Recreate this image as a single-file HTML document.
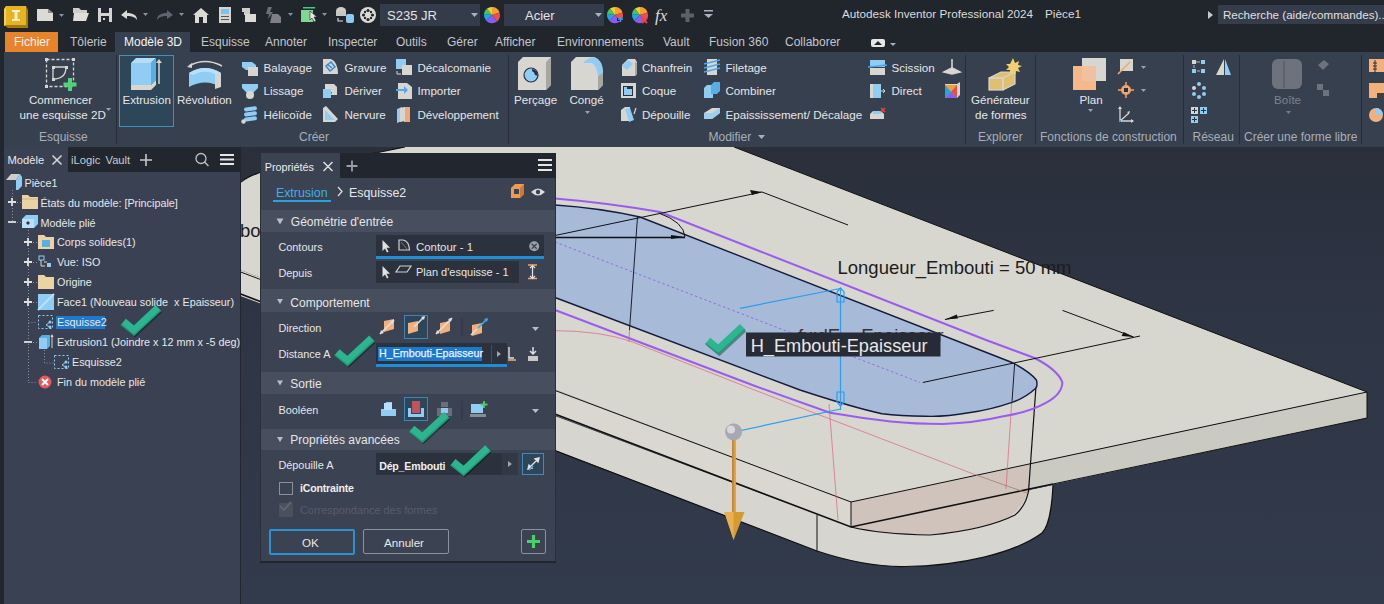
<!DOCTYPE html>
<html><head><meta charset="utf-8">
<style>
*{margin:0;padding:0;box-sizing:border-box}
html,body{width:1384px;height:604px;overflow:hidden;background:#22262e;font-family:"Liberation Sans",sans-serif;font-size:12px;color:#e8e8e8}
.a{position:absolute;white-space:nowrap}
#title{position:absolute;left:0;top:0;width:1384px;height:31px;background:#21252c}
#tabs{position:absolute;left:0;top:31px;width:1384px;height:21px;background:#21252c}
#ribbon{position:absolute;left:4px;top:52px;width:1380px;height:95px;background:#37404f}
#browser{position:absolute;left:4px;top:147px;width:236px;height:457px;background:#394153}
#vp{position:absolute;left:241px;top:147px;width:1143px;height:457px;background:linear-gradient(#2a2f3b,#2e3545 40%,#323b4c);overflow:hidden}
#panel{position:absolute;left:260px;top:153px;width:296px;height:410px;background:#3b4252;border:1px solid #20242c}
.tab{position:absolute;top:34px;color:#c9ccd2;font-size:12px}
.lbl{position:absolute;color:#aab0ba;font-size:12px}
.sep{position:absolute;top:56px;width:1px;height:88px;background:#262b35}
</style></head><body>
<div id="title">
<svg class="a" style="left:0;top:0" width="720" height="31" viewBox="0 0 720 31">
 <!-- Inventor logo -->
 <path d="M6 8 L26 6 L28 10 L28 28 L8 28 L4 25 L4 10 Z" fill="#a37a10"/>
 <rect x="6" y="6" width="20" height="19" fill="#e7b320"/>
 <path d="M4 9 L6 6 L6 25 L4 26 Z" fill="#f3d25a"/>
 <path d="M12 10 h8 v2 h-2.5 v7 h2.5 v2 h-8 v-2 h2.5 v-7 h-2.5 z" fill="#f6ecd0"/>
 <!-- new doc -->
 <path d="M37 9 h11 l5 4 v8 h-16 z" fill="#dcdad4"/>
 <path d="M48 9 v4 h5" fill="#8e8c88"/>
 <path d="M59 14 h5 l-2.5 3 z" fill="#8a93a6"/>
 <!-- open folder -->
 <path d="M73 8 h6 l2 2 h6 v3 h-14 z" fill="#cfcdc7"/>
 <path d="M74 13 h15 l-3 8 h-13 z" fill="#e0ded8"/>
 <!-- save -->
 <rect x="98" y="8" width="14" height="14" fill="#d6d4ce"/>
 <rect x="101" y="8" width="8" height="5" fill="#22262e"/>
 <rect x="101" y="16" width="8" height="6" fill="#22262e"/>
 <rect x="103" y="18" width="2" height="2" fill="#d6d4ce"/>
 <!-- undo -->
 <path d="M121 15 l6 -5 v3 c6 0 10 2 10 7 c-2 -3 -5 -4 -10 -4 v3 z" fill="#dcdad4"/>
 <path d="M143 13 h5 l-2.5 3 z" fill="#8a93a6"/>
 <!-- redo grey -->
 <path d="M173 15 l-6 -5 v3 c-6 0 -10 2 -10 7 c2 -3 5 -4 10 -4 v3 z" fill="#5c6472"/>
 <path d="M179 13 h5 l-2.5 3 z" fill="#8a93a6"/>
 <!-- home -->
 <path d="M193 15 l8 -7 l8 7 h-2 v8 h-12 v-8 z" fill="#dcdad4"/>
 <rect x="199" y="17" width="4" height="6" fill="#22262e"/>
 <!-- panel -->
 <rect x="219" y="7" width="12" height="16" fill="#d6d4ce"/>
 <rect x="221" y="9" width="8" height="5" fill="#7cc4f0"/>
 <rect x="221" y="16" width="8" height="1" fill="#555"/><rect x="221" y="19" width="8" height="1" fill="#555"/>
 <!-- folders -->
 <rect x="242" y="8" width="8" height="4" fill="#cfcdc7"/>
 <rect x="244" y="12" width="6" height="3" fill="#cfcdc7"/>
 <rect x="245" y="14" width="11" height="8" fill="#dcdad4"/>
 <!-- lightning grey -->
 <path d="M268 7 l4 0 l-2 5 l3 0 l-5 7 l1 -5 l-3 0 z" fill="#6d6f78"/>
 <path d="M272 14 h6 l3 3 v6 h-11 z" fill="#7f7f84"/>
 <path d="M288 13 h5 l-2.5 3 z" fill="#8a93a6"/>
 <!-- green select -->
 <rect x="303" y="7" width="12" height="1.5" fill="#3bd07a"/>
 <rect x="301" y="10" width="12" height="12" fill="#7fd890"/>
 <path d="M310 11 l7 6 l-3 0 l2 4 l-2 1 l-2 -4 l-2 2 z" fill="#e8e8e8" stroke="#22262e" stroke-width=".6"/>
 <path d="M322 13 h5 l-2.5 3 z" fill="#8a93a6"/>
 <!-- db -->
 <ellipse cx="341" cy="11" rx="5" ry="4" fill="#d0cec8"/>
 <rect x="336" y="11" width="10" height="5" fill="#c8c6c0"/>
 <rect x="346" y="14" width="8" height="9" rx="2" fill="#8ccaf5"/>
 <path d="M338 18 v3 h5" stroke="#ddd" stroke-width="1.2" fill="none"/>
 <!-- reel -->
 <circle cx="368" cy="15" r="8" fill="#dcdad4"/>
 <circle cx="368" cy="15" r="6.5" fill="none" stroke="#22262e" stroke-width="0"/>
 <circle cx="368" cy="10.5" r="1.6" fill="#22262e"/><circle cx="368" cy="19.5" r="1.6" fill="#22262e"/>
 <circle cx="363.5" cy="15" r="1.6" fill="#22262e"/><circle cx="372.5" cy="15" r="1.6" fill="#22262e"/>
 <circle cx="365" cy="12" r="1.2" fill="#22262e"/><circle cx="371" cy="12" r="1.2" fill="#22262e"/>
 <circle cx="365" cy="18" r="1.2" fill="#22262e"/><circle cx="371" cy="18" r="1.2" fill="#22262e"/>
 <!-- combos -->
 <rect x="380" y="4" width="100" height="22" fill="#343b4b"/>
 <path d="M471 13 h7 l-3.5 4 z" fill="#aab2c2"/>
 <rect x="504" y="4" width="100" height="22" fill="#343b4b"/>
 <path d="M595 13 h7 l-3.5 4 z" fill="#aab2c2"/>
 <!-- wheels -->
 <g id="wheel">
 <path d="M492 15 L492 7 A8 8 0 0 1 499.5 12.5 Z" fill="#f7a032"/>
 <path d="M492 15 L499.5 12.5 A8 8 0 0 1 497 21.5 Z" fill="#ef4d4d"/>
 <path d="M492 15 L497 21.5 A8 8 0 0 1 486 20.5 Z" fill="#8b5cf0"/>
 <path d="M492 15 L486 20.5 A8 8 0 0 1 484 14 Z" fill="#1fa6e8"/>
 <path d="M492 15 L484 14 A8 8 0 0 1 487 8.5 Z" fill="#3cc76a"/>
 <path d="M492 15 L487 8.5 A8 8 0 0 1 492 7 Z" fill="#f0d030"/>
 </g>
 <use href="#wheel" x="123" y="0"/>
 <rect x="617" y="18" width="7" height="3" fill="#22262e"/>
 <path d="M618 19 h5 M620.5 17 v5" stroke="#3aa0e8" stroke-width="1.5"/>
 <use href="#wheel" x="148" y="0"/>
 <path d="M642 18 l5 5 M647 18 l-5 5" stroke="#ef4040" stroke-width="2"/>
 <text x="655" y="21" font-family="Liberation Serif" font-style="italic" font-size="17" fill="#dcdad4">fx</text>
 <path d="M687.5 9 v13 M681 15.5 h13" stroke="#5a606c" stroke-width="4"/>
 <rect x="704" y="10" width="9" height="1.5" fill="#aab2c2"/>
 <path d="M704 14 h9 l-4.5 4 z" fill="#aab2c2"/>
</svg>
<div class="a" style="left:387px;top:8px;font-size:13px;color:#e4e4e4">S235 JR</div>
<div class="a" style="left:525px;top:8px;font-size:13px;color:#e4e4e4">Acier</div>
<div class="a" style="left:842px;top:7px;font-size:11.7px;color:#dcdcdc">Autodesk Inventor Professional 2024</div>
<div class="a" style="left:1045px;top:7px;font-size:11.8px;color:#dcdcdc">Pièce1</div>
<svg class="a" style="left:1207px;top:10px" width="8" height="10"><path d="M1 1 l5 4 l-5 4 z" fill="#c8c8c8"/></svg>
<div class="a" style="left:1217.5px;top:5px;width:167px;height:19px;background:#353c4b"></div>
<div class="a" style="left:1223px;top:7.5px;font-size:11.6px;color:#e0e0e0">Recherche (aide/commandes)...</div>
</div>
<div id="tabs">
<div class="a" style="left:5px;top:1px;width:53px;height:20px;background:#e8832a"></div>
<div class="a" style="left:115px;top:1px;width:75px;height:21px;background:#37404f"></div>
<div class="a" style="left:14px;top:4px;font-size:12px;color:#f4f4f4">Fichier</div>
<div class="a" style="left:70px;top:4px;font-size:12px;color:#c3c7ce">Tôlerie</div>
<div class="a" style="left:124px;top:4px;font-size:12px;color:#f4f4f4">Modèle 3D</div>
<div class="a" style="left:201px;top:4px;font-size:12px;color:#c3c7ce">Esquisse</div>
<div class="a" style="left:265px;top:4px;font-size:12px;color:#c3c7ce">Annoter</div>
<div class="a" style="left:328px;top:4px;font-size:12px;color:#c3c7ce">Inspecter</div>
<div class="a" style="left:396px;top:4px;font-size:12px;color:#c3c7ce">Outils</div>
<div class="a" style="left:447px;top:4px;font-size:12px;color:#c3c7ce">Gérer</div>
<div class="a" style="left:495px;top:4px;font-size:12px;color:#c3c7ce">Afficher</div>
<div class="a" style="left:557px;top:4px;font-size:12px;color:#c3c7ce">Environnements</div>
<div class="a" style="left:663px;top:4px;font-size:12px;color:#c3c7ce">Vault</div>
<div class="a" style="left:709px;top:4px;font-size:12px;color:#c3c7ce">Fusion 360</div>
<div class="a" style="left:785px;top:4px;font-size:12px;color:#c3c7ce">Collaborer</div>
<svg class="a" style="left:870px;top:6px" width="30" height="12"><rect x="1" y="2" width="14" height="8" rx="2" fill="#e6e6e6"/><path d="M4 8 l4 -4 l4 4z" fill="#21252c"/><path d="M20 6 h6 l-3 3z" fill="#aab2c2"/></svg>
</div>
<div id="ribbon"></div>
<svg class="a" style="left:0;top:52px" width="1384" height="95" viewBox="0 52 1384 95">
<!-- separators -->
<g fill="#272c36">
<rect x="116" y="55" width="1" height="89"/><rect x="508" y="55" width="1" height="89"/>
<rect x="965" y="55" width="1" height="89"/><rect x="1035" y="55" width="1" height="89"/>
<rect x="1183" y="55" width="1" height="89"/><rect x="1239" y="55" width="1" height="89"/>
<rect x="1361" y="55" width="1" height="89"/>
</g>
<!-- Commencer esquisse icon -->
<g stroke="#d8d6d0" stroke-width="1.3" fill="none">
<rect x="46.5" y="59.5" width="27" height="27" stroke-dasharray="3 2"/>
<path d="M53 67 v12 M53 67 h13 M66 67 c0 8 -4 12 -13 12"/>
</g>
<g fill="#d8d6d0"><rect x="45" y="58" width="3" height="3"/><rect x="72" y="58" width="3" height="3"/><rect x="45" y="85" width="3" height="3"/>
<rect x="52" y="66" width="3" height="3"/><rect x="65" y="66" width="3" height="3"/><rect x="52" y="78" width="3" height="3"/></g>
<path d="M70 78 v13 M63.5 84.5 h13" stroke="#4fd27a" stroke-width="4"/>
<path d="M106 108 h5 l-2.5 3z" fill="#9aa2b0"/>
<!-- Extrusion highlight -->
<rect x="119.5" y="55.5" width="54" height="71" fill="#2d4659" stroke="#3f8fbf" stroke-width="1"/>
<path d="M131 63 l5 -5 h20 l-5 5z" fill="#b5ddf8"/>
<rect x="131" y="63" width="20" height="22" fill="#8fcdf5"/>
<path d="M151 63 l5 -5 v22 l-5 5z" fill="#5aaee6"/>
<path d="M131 85 h20 l5 -5 v5 l-5 5 h-20z" fill="#d8d6d0"/>
<path d="M159 84 v-23" stroke="#d8d6d0" stroke-width="1.5"/><path d="M156 63 l3 -4 l3 4z" fill="#d8d6d0"/>
<!-- Revolution -->
<path d="M189 66 q16 -9 33 0" stroke="#d8d6d0" stroke-width="1.5" fill="none"/><path d="M187 67 l5 -4 l0 5z" fill="#d8d6d0"/>
<path d="M189 73 q16 -10 32 0 l0 14 q-16 -9 -32 0z" fill="#8fcdf5"/>
<path d="M189 73 q16 -10 32 0 l-4 2 q-12 -7 -24 0z" fill="#b8e0fa"/>
<path d="M215 74 l6 -1 v14 l-6 2z" fill="#d8d6d0"/>
<!-- Balayage -->
<path d="M242 62 h10 l4 3 v5 h-10 l-4 -3z" fill="#8fcdf5"/><rect x="248" y="67" width="10" height="9" fill="#d8d6d0"/>
<!-- Lissage -->
<path d="M242 84 h16 v4 l-5 5 h-6 l-5 -5z" fill="#8fcdf5"/><circle cx="250" cy="95" r="4" fill="#d8d6d0"/>
<!-- Helicoide -->
<g fill="#8fcdf5"><rect x="244" y="107" width="13" height="4" rx="2" transform="rotate(-8 250 109)"/><rect x="244" y="112" width="13" height="4" rx="2" transform="rotate(-8 250 114)"/><rect x="244" y="117" width="13" height="4" rx="2" transform="rotate(-8 250 119)"/></g>
<circle cx="243.5" cy="121.5" r="2.2" fill="#d8d6d0"/>
<!-- Gravure -->
<path d="M323 59 h8 q7 3 7 15 h-15z" fill="#d8d6d0"/><path d="M326 66 l5 -4 l4 5 l-5 4z M327 64 l5 4" stroke="#2e8ad8" stroke-width="1.4" fill="none"/>
<!-- Deriver -->
<rect x="325" y="84" width="9" height="8" fill="#d8d6d0"/><path d="M334 84 l3 3 v8 h-6z" fill="#d8d6d0"/>
<rect x="323" y="89" width="8" height="9" fill="#8fcdf5"/>
<!-- Nervure -->
<path d="M323 108 l3 -2 l12 13 l-3 3 h-12z" fill="#d8d6d0"/><path d="M325 110 l10 10 h-10z" fill="#8fcdf5"/>
<!-- Decalcomanie -->
<rect x="396" y="59" width="10" height="10" fill="#8fcdf5"/><rect x="402" y="65" width="10" height="10" fill="#d8d6d0"/>
<path d="M397 71 v3 h4" stroke="#d8d6d0" stroke-width="1" fill="none"/>
<!-- Importer -->
<path d="M398 83 h9 l5 4 v12 h-14z" fill="#d8d6d0"/><path d="M396 89 h8 v-3 l4 4 l-4 4 v-3 h-8z" fill="#52a8e8"/>
<!-- Developpement -->
<path d="M397 109 l5 -2 v14 l-5 2z" fill="#8fcdf5"/><path d="M404 107 h6 v15 h-6z" fill="#f0a878"/><path d="M400 108 l5 -1 v14 l-5 1z" fill="#d8d6d0"/>
<!-- Percage -->
<path d="M518 62 l5 -5 h28 v28 l-5 5 h-28z" fill="#d8d6d0"/><path d="M546 62 l5 -5 v28 l-5 5z" fill="#a8a6a0"/>
<circle cx="531" cy="75" r="7" fill="#8fcdf5" stroke="#2a3140" stroke-width="1.2"/><path d="M532 69 a7 7 0 0 1 6 7 l-3 -1 a5 5 0 0 0 -3 -4z" fill="#2a3140"/>
<!-- Conge -->
<path d="M571 62 l5 -5 h18 q9 3 9 18 v10 l-5 5 h-27z" fill="#d8d6d0"/>
<path d="M583 63 q4 -5 11 -6 q9 3 9 16 l-5 3 q-1 -10 -6 -13z" fill="#8fcdf5"/>
<path d="M598 76 l5 -3 v12 l-5 5z" fill="#a8a6a0"/>
<path d="M585 111 h5 l-2.5 3z" fill="#9aa2b0"/>
<!-- Chanfrein -->
<path d="M622 65 l6 -6 h7 l2 3 v12 l-2 2 h-13z" fill="#d8d6d0"/><path d="M622 66 l6 -6 l5 4 l-6 6z" fill="#8fcdf5"/><path d="M635 62 l2 1 v11 l-2 2z" fill="#a8a6a0"/>
<!-- Coque -->
<rect x="621" y="83" width="15" height="15" fill="#d8d6d0"/><rect x="623" y="86" width="10" height="10" fill="#2a3140"/><rect x="624" y="89" width="8" height="6" fill="#8fcdf5"/><rect x="624" y="87" width="3" height="8" fill="#8fcdf5"/>
<!-- Depouille -->
<path d="M621 110 l4 -3 h5 v14 h-9z" fill="#d8d6d0"/><path d="M625 109 l5 -1 l4 12 l-5 2z" fill="#8fcdf5"/><path d="M636 108 l-2 6" stroke="#d8d6d0" stroke-width="1.2"/>
<!-- Filetage -->
<rect x="707" y="59" width="10" height="16" fill="#d8d6d0"/><path d="M704 64 l16 -4 M704 68 l16 -4 M704 72 l16 -4" stroke="#4aa8ea" stroke-width="1.6"/>
<!-- Combiner -->
<path d="M704 88 l3 -3 h6 v6 h-9z" fill="#8fcdf5"/><rect x="704" y="90" width="9" height="8" fill="#8fcdf5"/><path d="M711 85 l3 -3 h6 v9 l-3 3 h-6z" fill="#5aaee6"/>
<!-- Epaississement -->
<path d="M704 113 l8 -5 h8 v5 l-8 6 h-8z" fill="#d8d6d0"/><path d="M704 113 h8 l8 -5 v5 l-8 6 h-8z" fill="#8fcdf5" opacity=".8"/>
<!-- Scission -->
<rect x="870" y="60" width="15" height="7" fill="#8fcdf5"/><rect x="870" y="68" width="15" height="7" fill="#d8d6d0"/><path d="M868 67 l19 -2" stroke="#4aa8ea" stroke-width="1.3"/>
<path d="M870 84 v14 h3 v-14z" fill="#d8d6d0"/><rect x="873" y="84" width="8" height="14" fill="#8fcdf5"/><path d="M881 91 h4 M883 89 l2 2 l-2 2" stroke="#d8d6d0" stroke-width="1" fill="none"/>
<path d="M870 114 l3 -3 h8 l3 3 v5 h-14z" fill="#d8d6d0"/><path d="M873 111 h8 v3 h-8z" fill="#8fcdf5"/><path d="M881 108 l4 4 M885 108 l-4 4" stroke="#ef4040" stroke-width="1.6"/>
<path d="M952 59 v9 M944 72 l8 -4 l8 4 l-8 2z" stroke="#d8d6d0" stroke-width="1.6" fill="#d8d6d0"/>
<path d="M945 84 h12 l3 -2 v13 l-3 3 h-12z" fill="#d8d6d0"/>
<g><path d="M945 85 h12 v13 h-12z" fill="#3cc76a"/><path d="M945 85 l12 0 l-6 7z" fill="#f7a032"/><path d="M957 85 v13 l-6 -6z" fill="#ef4d4d"/><path d="M945 98 h12 l-6 -6z" fill="#8b5cf0"/><path d="M945 85 v13 l6 -6z" fill="#1fa6e8"/></g>
<!-- Generateur de formes -->
<path d="M989 78 l12 -6 h14 v12 l-12 6 h-14z" fill="#e0c070"/><path d="M989 78 l12 -6 h14 l-12 6z M1003 78 v12 M1015 72 l-12 6" stroke="#d8d6d0" stroke-width="1.2" fill="none"/>
<rect x="989" y="78" width="14" height="12" fill="none" stroke="#d8d6d0" stroke-width="1.2"/><path d="M1015 72 v12 l-12 6" stroke="#d8d6d0" stroke-width="1.2" fill="none"/>
<path d="M1013 58 l2 5 l4 -2 l-1 4 l4 1 l-4 2 l2 4 l-4 -1 l-1 4 l-2 -3 l-3 2 l0 -4 l-4 0 l3 -3 l-3 -3 l4 0z" fill="#f1d070"/>
<!-- Plan -->
<rect x="1082" y="58" width="24" height="23" fill="#d8d6d0"/><rect x="1073" y="66" width="23" height="24" fill="#f4b88a"/>
<rect x="1082" y="66" width="14" height="15" fill="#f0c0a0"/>
<path d="M1088 109 h5 l-2.5 3z" fill="#9aa2b0"/>
<rect x="1120" y="59" width="13" height="12" fill="#d8d6d0"/><path d="M1118 74 l12 -12" stroke="#f7a860" stroke-width="1.6"/><path d="M1141 66 h5 l-2.5 3z" fill="#9aa2b0"/>
<circle cx="1126" cy="90" r="5" fill="#f4a46a"/><path d="M1126 82 v16 M1118 90 h16" stroke="#f4a46a" stroke-width="1.5"/><rect x="1124" y="88" width="4" height="4" fill="#2a3140"/><path d="M1141 89 h5 l-2.5 3z" fill="#9aa2b0"/>
<path d="M1120 107 v14 h13 M1120 121 l9 -8" stroke="#d8d6d0" stroke-width="1.3" fill="none"/><path d="M1118 109 l2 -3 l2 3z M1131 119 l3 2 l-3 2z M1127 112 l3 -1 l-1 3z" fill="#d8d6d0"/><rect x="1119" y="120" width="2" height="2" fill="#3aa8ee"/>
<!-- Reseau -->
<rect x="1192" y="60" width="4" height="4" fill="#d8d6d0"/><rect x="1201" y="60" width="4" height="4" fill="#8fcdf5"/><rect x="1192" y="69" width="4" height="4" fill="#8fcdf5"/><rect x="1201" y="69" width="4" height="4" fill="#8fcdf5"/>
<path d="M1196 62 h4 M1194 65 v3 M1197 71 h3" stroke="#d8d6d0" stroke-width=".8"/>
<path d="M1224 59 v16 h-8z" fill="#d8d6d0"/><path d="M1225 59 l6 16 h-6z" fill="#8fcdf5"/>
<g fill="#8fcdf5"><circle cx="1199" cy="84" r="2"/><circle cx="1204" cy="88" r="2"/><circle cx="1204" cy="94" r="2"/><circle cx="1199" cy="97" r="2"/><circle cx="1194" cy="94" r="2"/></g><circle cx="1194" cy="88" r="2" fill="#d8d6d0"/>
<rect x="1191" y="107" width="7" height="7" fill="#d8d6d0"/><rect x="1200" y="107" width="7" height="7" fill="#8fcdf5"/><rect x="1191" y="116" width="7" height="7" fill="#8fcdf5"/>
<path d="M1194.5 108 v5 M1192 110.5 h5 M1203.5 108 v5 M1201 110.5 h5 M1194.5 117 v5 M1192 119.5 h5" stroke="#2a3140" stroke-width="1"/>
<!-- Boite grey -->
<rect x="1272" y="59" width="30" height="30" rx="6" fill="#6e727c"/><path d="M1284 61 v27" stroke="#4e525c" stroke-width="1"/>
<path d="M1318 65 l6 -5 l5 4 l-6 6z" fill="#6e727c"/><rect x="1317" y="84" width="6" height="6" fill="#6e727c"/><rect x="1323" y="90" width="6" height="6" fill="#6e727c"/>
<path d="M1286 111 h5 l-2.5 3z" fill="#767c88"/>
<!-- orange partial -->
<rect x="1369" y="59" width="15" height="13" fill="#f4b07a"/><path d="M1375 60 v13 M1373 63 h4 M1373 66 h4 M1373 69 h4" stroke="#2a3140" stroke-width="1"/>
<path d="M1369 83 h15 v10 h-7 v5 h-8z" fill="#f4b07a"/>
<circle cx="1376" cy="115" r="7" fill="#f4b07a"/><path d="M1376 108 a7 7 0 0 1 7 7 h-7z" fill="#8fcdf5"/>
</svg>
<svg class="a" style="left:757px;top:134px" width="10" height="6"><path d="M1 1 h7 l-3.5 4z" fill="#a9aeb8"/></svg>
<div class="a" style="left:29px;top:93px;font-size:11.6px;color:#e6e6e6">Commencer</div>
<div class="a" style="left:19.5px;top:108px;font-size:11.6px;color:#e6e6e6">une esquisse 2D</div>
<div class="a" style="left:122.5px;top:93px;font-size:11.6px;color:#e6e6e6">Extrusion</div>
<div class="a" style="left:177px;top:93px;font-size:11.6px;color:#e6e6e6">Révolution</div>
<div class="a" style="left:263.5px;top:60.5px;font-size:11.6px;color:#e6e6e6">Balayage</div>
<div class="a" style="left:263.5px;top:84px;font-size:11.6px;color:#e6e6e6">Lissage</div>
<div class="a" style="left:263.5px;top:108px;font-size:11.6px;color:#e6e6e6">Hélicoïde</div>
<div class="a" style="left:344.5px;top:60.5px;font-size:11.6px;color:#e6e6e6">Gravure</div>
<div class="a" style="left:344.5px;top:84px;font-size:11.6px;color:#e6e6e6">Dériver</div>
<div class="a" style="left:344.5px;top:108px;font-size:11.6px;color:#e6e6e6">Nervure</div>
<div class="a" style="left:417.5px;top:60.5px;font-size:11.6px;color:#e6e6e6">Décalcomanie</div>
<div class="a" style="left:417.5px;top:84px;font-size:11.6px;color:#e6e6e6">Importer</div>
<div class="a" style="left:417.5px;top:108px;font-size:11.6px;color:#e6e6e6">Développement</div>
<div class="a" style="left:642px;top:60.5px;font-size:11.6px;color:#e6e6e6">Chanfrein</div>
<div class="a" style="left:642px;top:84px;font-size:11.6px;color:#e6e6e6">Coque</div>
<div class="a" style="left:642px;top:108px;font-size:11.6px;color:#e6e6e6">Dépouille</div>
<div class="a" style="left:725.5px;top:60.5px;font-size:11.6px;color:#e6e6e6">Filetage</div>
<div class="a" style="left:725.5px;top:84px;font-size:11.6px;color:#e6e6e6">Combiner</div>
<div class="a" style="left:725.5px;top:108px;font-size:11.6px;color:#e6e6e6">Epaississement/ Décalage</div>
<div class="a" style="left:891.5px;top:60.5px;font-size:11.6px;color:#e6e6e6">Scission</div>
<div class="a" style="left:891.5px;top:84px;font-size:11.6px;color:#e6e6e6">Direct</div>
<div class="a" style="left:514px;top:93px;font-size:11.6px;color:#e6e6e6">Perçage</div>
<div class="a" style="left:569.5px;top:93px;font-size:11.6px;color:#e6e6e6">Congé</div>
<div class="a" style="left:971px;top:93px;font-size:11.6px;color:#e6e6e6">Générateur</div>
<div class="a" style="left:975px;top:108px;font-size:11.6px;color:#e6e6e6">de formes</div>
<div class="a" style="left:1079.5px;top:93px;font-size:11.6px;color:#e6e6e6">Plan</div>
<div class="a" style="left:1274px;top:93px;font-size:11.6px;color:#7d828c">Boîte</div>
<div class="a" style="left:39px;top:130px;font-size:12px;color:#a9aeb8">Esquisse</div>
<div class="a" style="left:299px;top:130px;font-size:12px;color:#a9aeb8">Créer</div>
<div class="a" style="left:708.5px;top:130px;font-size:12px;color:#a9aeb8">Modifier</div>
<div class="a" style="left:978px;top:130px;font-size:12px;color:#a9aeb8">Explorer</div>
<div class="a" style="left:1040px;top:130px;font-size:12px;color:#a9aeb8">Fonctions de construction</div>
<div class="a" style="left:1192.5px;top:130px;font-size:12px;color:#a9aeb8">Réseau</div>
<div class="a" style="left:1244px;top:130px;font-size:12px;color:#a9aeb8">Créer une forme libre</div>
<div id="browser">
<div class="a" style="left:0;top:0;width:236px;height:25px;background:#22262e"></div>
<div class="a" style="left:0;top:0;width:64px;height:25px;background:#394153"></div>
</div>
<div class="a" style="left:7.5px;top:153.5px;font-size:11.2px;color:#e8e8e8">Modèle</div>
<div class="a" style="left:71px;top:153.5px;font-size:11.2px;color:#c8ccd2">iLogic</div>
<div class="a" style="left:105.5px;top:153.5px;font-size:11.2px;color:#c8ccd2">Vault</div>
<svg class="a" style="left:0;top:147px" width="241" height="457" viewBox="0 147 241 457">
<path d="M52.5 155.5 l9 9 M61.5 155.5 l-9 9" stroke="#d8d8d8" stroke-width="1.5"/>
<path d="M146 154 v12 M140 160 h12" stroke="#c8c8c8" stroke-width="1.6"/>
<circle cx="201" cy="158.5" r="5" fill="none" stroke="#c0c0c0" stroke-width="1.3"/><path d="M204.5 162 l4 4" stroke="#c0c0c0" stroke-width="1.5"/>
<path d="M220 155 h14 M220 159.5 h14 M220 164 h14" stroke="#e6e6e6" stroke-width="1.8"/>
<!-- tree dotted lines -->
<g stroke="#8a909c" stroke-width="1" stroke-dasharray="1 2" fill="none">
<path d="M12.5 190 v33 M17 202.5 h4 M17 222.5 h4"/>
<path d="M28.5 230 v152 M33 242.5 h4 M33 262.5 h4 M33 282.5 h4 M33 302.5 h4 M28.5 322.5 h9 M33 342.5 h4 M28.5 382.5 h9"/>
<path d="M44.5 350 v13 h9"/>
</g>
<!-- plus/minus -->
<g stroke="#e0e0e0" stroke-width="1.8">
<path d="M8 202 h8 M12 198 v8"/><path d="M8 222 h8"/>
<path d="M24 242 h8 M28 238 v8"/><path d="M24 262 h8 M28 258 v8"/><path d="M24 282 h8 M28 278 v8"/><path d="M24 302 h8 M28 298 v8"/>
<path d="M24 342 h8"/>
</g>
<!-- icons -->
<path d="M6 180 l5 -6 h9 l-4 6z" fill="#d0cec8"/><path d="M16 180 l4 -6 l2 3 v9 l-4 4 h-2z" fill="#8fcdf5"/>
<path d="M22 195 h6 l2 2 h8 v12 h-16z" fill="#ecd3a3"/><path d="M22 199 h16" stroke="#c9ae7c" stroke-width=".8"/>
<path d="M22 219 l4 -4 h12 v9 l-4 4 h-12z" fill="#8fcdf5"/><rect x="22" y="219" width="12" height="9" fill="#b8e0fa"/>
<path d="M28 221 l2 2 l-2 2 l-2 -2z" fill="#333"/>
<path d="M38 235 h6 l2 2 h8 v12 h-16z" fill="#ecd3a3"/><rect x="42" y="240" width="8" height="7" fill="#5aaee6"/>
<rect x="39" y="256" width="5" height="4" fill="none" stroke="#8fcdf5" stroke-width="1"/><path d="M41 260 v6 h4 M44 262 h3" stroke="#d8d6d0" stroke-width="1" fill="none"/><rect x="47" y="263" width="4" height="4" fill="#8fcdf5"/>
<path d="M38 275 h6 l2 2 h8 v12 h-16z" fill="#ecd3a3"/>
<path d="M38 294 h16 v16 h-16z" fill="#8fcdf5"/><path d="M38 310 l16 -16" stroke="#b8e0fa" stroke-width="2"/>
<rect x="38.5" y="315.5" width="14" height="13" fill="none" stroke="#8fcdf5" stroke-width="1" stroke-dasharray="2 2"/><path d="M46 325 l4 -3 M46 325 l4 2" stroke="#8fcdf5" stroke-width="1"/><circle cx="50" cy="322" r="1.5" fill="#8fcdf5"/><circle cx="50" cy="327" r="1.5" fill="#8fcdf5"/>
<path d="M39 338 l3 -3 h8 v11 l-3 3 h-8z" fill="#5aaee6"/><rect x="39" y="338" width="8" height="11" fill="#8fcdf5"/><path d="M52 348 v-13" stroke="#d8d6d0" stroke-width="1"/><path d="M50.5 337 l1.5 -3 l1.5 3z" fill="#d8d6d0"/>
<rect x="54.5" y="355.5" width="14" height="13" fill="none" stroke="#8fcdf5" stroke-width="1" stroke-dasharray="2 2"/><path d="M62 365 l4 -3 M62 365 l4 2" stroke="#8fcdf5" stroke-width="1"/><circle cx="66" cy="362" r="1.5" fill="#8fcdf5"/><circle cx="66" cy="367" r="1.5" fill="#8fcdf5"/>
<circle cx="45" cy="382" r="6.5" fill="#e85858"/><path d="M42 379 l6 6 M48 379 l-6 6" stroke="#fff" stroke-width="2"/>
</svg>
<div class="a" style="left:24.5px;top:176.6px;font-size:10.8px;color:#e8e8e8;line-height:13px">Pièce1</div>
<div class="a" style="left:40.4px;top:196.5px;font-size:10.8px;color:#e8e8e8;line-height:13px">États du modèle: [Principale]</div>
<div class="a" style="left:40.4px;top:216.5px;font-size:10.8px;color:#e8e8e8;line-height:13px">Modèle plié</div>
<div class="a" style="left:57px;top:236.4px;font-size:10.8px;color:#e8e8e8;line-height:13px">Corps solides(1)</div>
<div class="a" style="left:57px;top:256.4px;font-size:10.8px;color:#e8e8e8;line-height:13px">Vue: ISO</div>
<div class="a" style="left:57px;top:276.4px;font-size:10.8px;color:#e8e8e8;line-height:13px">Origine</div>
<div class="a" style="left:57px;top:296.3px;font-size:10.8px;color:#e8e8e8;line-height:13px">Face1 (Nouveau solide&nbsp; x Epaisseur)</div>
<div class="a" style="left:56px;top:315.8px;width:49px;height:13.5px;background:#1e78cc"></div>
<div class="a" style="left:57px;top:316.2px;font-size:10.8px;color:#e8e8e8;line-height:13px">Esquisse2</div>
<div class="a" style="left:57px;top:336.2px;font-size:10.8px;color:#e8e8e8;line-height:13px">Extrusion1 (Joindre x 12 mm x -5 deg)</div>
<div class="a" style="left:72px;top:356.1px;font-size:10.8px;color:#e8e8e8;line-height:13px">Esquisse2</div>
<div class="a" style="left:57px;top:376.1px;font-size:10.8px;color:#e8e8e8;line-height:13px">Fin du modèle plié</div>

<div id="vp"><svg style="position:absolute;left:-241px;top:-147px" width="1384" height="604" viewBox="0 0 1384 604">
<!-- emboss lower body -->
<path d="M470 420 L555 450 L817 551 C850 562 880 567 905 566.5 C960 566 1015 553 1042 533 C1050 525 1052 505 1053 485 L851 527 L555 416 Z" fill="#d6d5cf"/>
<!-- plate left face -->
<path d="M230 266 L851 502 L851 527 L230 292 Z" fill="#d9d7d0"/>
<!-- plate front face -->
<path d="M851 502 L1367 392 L1367 418 L851 527 Z" fill="#cac9c2"/>
<!-- pink tint on front face (transparent emboss) -->
<path d="M851 502 L1028 464 L1029 488 Q1024 510 1000 522 Q950 537 890 534 Q865 531 851 527 Z" fill="#cfc3bb"/>
<!-- plate top face -->
<path d="M230 190 Q246 175 268 170 L378 152.5 L405 147 L734 147 L1367 392 L851 502 L230 266 Z" fill="#d7d6cf"/>
<!-- edges -->
<g stroke="#111" fill="none">
<path d="M241 182 Q250 175 268 170 L378 152.5 L405 147" stroke-width="1.2"/>
<path d="M734 147 L1367 392" stroke-width="1"/>
<path d="M1367 392 L851 502 L230 268" stroke-width="1"/>
<path d="M230 290 L851 527 L1053 484" stroke-width="1.6"/>
<path d="M1367 392 V418 L1053 484" stroke-width="1"/>
<path d="M851 502 V527" stroke-width="1"/>
<path d="M470 418 L817 551 C850 562 880 567 905 566.5 C960 566 1015 553 1042 533 C1050 525 1052 505 1053 485" stroke-width="1.2"/>
<path d="M817 515 V551" stroke-width="1"/>
<path d="M851 527 Q880 534 930 535 Q985 530 1015 515 Q1027 505 1029 488" stroke-width="1.2"/>
<path d="M1036 386 L1028.5 492" stroke-width="1.2"/>
</g>
<!-- pink wall lines -->
<g stroke="#e0607a" stroke-width=".8" fill="none" opacity=".85">
<path d="M555 330.6 Q600 331 630 341 L755 390.2 L976 475"/>
<path d="M829 404 L838 520"/>
<path d="M1011.7 403 L1006 489"/>
<path d="M555 310 L560 312"/>
</g>
<path d="M976 475 L1027 493" stroke="#a08070" stroke-width=".8"/>
<!-- slot blue -->
<path d="M555 205 Q600 208 640 217 L1012 362.5 Q1030 372 1036.4 380 Q1038 386 1035.5 388.5 Q1025 398 1012 402.4 Q990 410 968.7 412.8 Q945 417 925.4 416.3 Q900 416 882 413.7 Q855 408 800 390 L555 297.5 Z" fill="#a7bad8"/>
<path d="M555 205 Q600 208 640 217 L1012 362.5 Q1030 372 1036.4 380 Q1038 386 1035.5 388.5 Q1025 398 1012 402.4 Q990 410 968.7 412.8 Q945 417 925.4 416.3 Q900 416 882 413.7 Q855 408 800 390 L555 297.5" fill="none" stroke="#161a40" stroke-width="1.4"/>
<!-- purple outer -->
<path d="M555 198.4 Q610 203 660 212 L986 340 L1034.6 358 Q1058 370 1062.4 382.5 Q1062 394 1046.7 402.4 Q1030 412 1003.4 416.3 Q975 423 942.7 424 Q915 424 890.7 421.5 Q860 418 830 412.8 L755 386 L555 310" fill="none" stroke="#9a5cf0" stroke-width="2"/>
<!-- dashed purple sketch line -->
<path d="M555 242 L920 382.5" stroke="#9a5cf0" stroke-width=".9" stroke-dasharray="2.5 2.5"/>
<!-- dark interior lines -->
<g stroke="#1a1e30" fill="none" stroke-width="1">
<path d="M637.5 217 L629.5 330"/>
<path d="M1014.7 363 L1012 401.6"/>
</g>
<path d="M629.5 330 L629 342" stroke="#e0607a" stroke-width=".8"/>
<!-- dimension lines -->
<g stroke="#111" stroke-width="1" fill="none">
<path d="M555 235.5 L762 192 L848 225"/>
<path d="M555 237.5 H685" stroke-width="1.5"/>
<path d="M658.7 213 Q684 222 685 237"/>
<path d="M944.9 319.5 L993.7 310.4"/>
<path d="M1062.5 310.4 L1133.6 337"/>
<path d="M922.8 382.5 L1140 336"/>
</g>
<g fill="#111">
<path d="M762 192 l-12 -2 l2 5 z"/>
<path d="M685 237 l-14 -2 v4 z"/>
<path d="M944.9 319.5 l12 -5 l1 4 z"/>
<path d="M1133.6 337 l-12 -1 l2 -4 z"/>
</g>
<!-- blue dimension -->
<g stroke="#2a9ef0" stroke-width="1.2" fill="none">
<path d="M840.5 288 V410"/>
<path d="M740 308.3 L840.5 288.5"/>
<path d="M734 432 L840.5 409"/>
<path d="M837 292 l3.5 -4 l3.5 4 v10 h-7 z"/>
<path d="M837 392 l0 10 l3.5 4 l3.5 -4 v-10 z"/>
</g>
<!-- texts -->
<text x="837.5" y="273.8" font-family="Liberation Sans" font-size="18.5" fill="#1c1c1c">Longueur_Embouti = 50 mm</text>
<text x="240" y="236.5" font-family="Liberation Sans" font-size="18.5" fill="#1c1c1c">bo</text>
<text x="798" y="342" font-family="Liberation Sans" font-size="18.5" fill="#3a3030">fx:dE = Epaisseur</text>
<rect x="746" y="332.5" width="194.5" height="24" fill="#262b35"/>
<text x="750.7" y="351.8" font-family="Liberation Sans" font-size="18.2" fill="#e8e8e8">H_Embouti-Epaisseur</text>
<!-- ball & arrow -->
<rect x="732.3" y="438" width="3.6" height="76" fill="#e0a040"/><rect x="732.3" y="438" width="1.2" height="76" fill="#b87820"/>
<path d="M724.3 512 L744.5 512 L733.6 540 Z" fill="#d69a32"/><path d="M724.3 512 L733.6 512 L733.6 540 Z" fill="#e8b050"/>
<circle cx="733.6" cy="432" r="8.5" fill="#a8a8b2"/><circle cx="731" cy="429.5" r="4" fill="#d8d8de"/>
</svg></div>
<div id="panel"></div>
<div class="a" style="left:260px;top:153px;width:296px;height:409px;background:#3b4252;border-left:1px solid #2a2f38;border-right:1px solid #2a2f38;border-bottom:1px solid #22262d"></div>
<div class="a" style="left:340px;top:153px;width:216px;height:25px;background:#22262e"></div>
<div class="a" style="left:261px;top:210px;width:294px;height:22px;background:#474e5e"></div>
<div class="a" style="left:261px;top:289px;width:294px;height:23px;background:#474e5e"></div>
<div class="a" style="left:261px;top:372px;width:294px;height:22px;background:#474e5e"></div>
<div class="a" style="left:261px;top:429px;width:294px;height:21px;background:#474e5e"></div>
<div class="a" style="left:376px;top:235px;width:168px;height:21px;background:#2b313d"></div>
<div class="a" style="left:376px;top:256px;width:168px;height:2.5px;background:#1d8fd8"></div>
<div class="a" style="left:376px;top:261px;width:143px;height:22px;background:#2b313d"></div>
<div class="a" style="left:376px;top:343px;width:131px;height:21px;background:#2b313d"></div>
<div class="a" style="left:376px;top:364px;width:131px;height:3px;background:#1d8fd8"></div>
<div class="a" style="left:378px;top:347px;width:104px;height:14px;background:#1a7ad0"></div>
<div class="a" style="left:376px;top:453px;width:126px;height:22px;background:#2b313d"></div>
<div class="a" style="left:502px;top:453px;width:16px;height:22px;background:#323846"></div>
<div class="a" style="left:404px;top:315px;width:24px;height:24px;background:#2d4659;border:1px solid #3d84b8"></div>
<div class="a" style="left:404px;top:397px;width:24px;height:24px;background:#2d4659;border:1px solid #3d84b8"></div>
<div class="a" style="left:522px;top:453px;width:22px;height:22px;background:#2d4659;border:1px solid #3d8bbf"></div>
<div class="a" style="left:269px;top:528.5px;width:86px;height:26px;border:2px solid #2a92d4;border-radius:2px"></div>
<div class="a" style="left:363px;top:529px;width:86px;height:25px;border:1px solid #8c929c;border-radius:2px"></div>
<div class="a" style="left:521px;top:529px;width:25px;height:25px;border:1px solid #8c929c;border-radius:2px"></div>
<div class="a" style="left:278.5px;top:481.5px;width:14px;height:13.5px;border:1px solid #8a909a"></div>
<div class="a" style="left:278.5px;top:503px;width:14px;height:13.5px;background:#4a505c"></div>
<div class="a" style="left:264.7px;top:161.5px;font-size:10.8px;line-height:1;color:#ececec;">Propriétés</div>
<div class="a" style="left:275.9px;top:186.5px;font-size:12.4px;line-height:1;color:#3eb0e8;">Extrusion</div>
<div class="a" style="left:273px;top:200px;width:58px;height:1.5px;background:#2aa0e0"></div>
<div class="a" style="left:349px;top:186.5px;font-size:12.4px;line-height:1;color:#e8e8e8;">Esquisse2</div>
<div class="a" style="left:290.8px;top:215.7px;font-size:12px;line-height:1;color:#e6e6e6;">Géométrie d'entrée</div>
<div class="a" style="left:290.3px;top:296.5px;font-size:12px;line-height:1;color:#e6e6e6;">Comportement</div>
<div class="a" style="left:290.3px;top:378.0px;font-size:12px;line-height:1;color:#e6e6e6;">Sortie</div>
<div class="a" style="left:290.3px;top:434.4px;font-size:12px;line-height:1;color:#e6e6e6;">Propriétés avancées</div>
<div class="a" style="left:278.4px;top:241.6px;font-size:10.9px;line-height:1;color:#e6e6e6;">Contours</div>
<div class="a" style="left:278.4px;top:267.6px;font-size:10.9px;line-height:1;color:#e6e6e6;">Depuis</div>
<div class="a" style="left:278.4px;top:323.2px;font-size:10.9px;line-height:1;color:#e6e6e6;">Direction</div>
<div class="a" style="left:278.4px;top:349.2px;font-size:10.9px;line-height:1;color:#e6e6e6;">Distance A</div>
<div class="a" style="left:278.4px;top:405.1px;font-size:10.9px;line-height:1;color:#e6e6e6;">Booléen</div>
<div class="a" style="left:278.4px;top:459.6px;font-size:10.9px;line-height:1;color:#e6e6e6;">Dépouille A</div>
<div class="a" style="left:416px;top:241.6px;font-size:11.4px;line-height:1;color:#e6e6e6;">Contour - 1</div>
<div class="a" style="left:416px;top:267.0px;font-size:11px;line-height:1;color:#e6e6e6;">Plan d'esquisse - 1</div>
<div class="a" style="left:379px;top:347.6px;font-size:10.7px;line-height:1;color:#eef2f6;-webkit-text-stroke:0.25px #eef2f6">H_Embouti-Epaisseur</div>
<div class="a" style="left:379.2px;top:460.5px;font-size:10.6px;line-height:1;color:#f0f0f0;font-weight:bold;letter-spacing:-0.2px">Dép_Embouti</div>
<div class="a" style="left:300px;top:483.3px;font-size:10.6px;line-height:1;color:#f0f0f0;font-weight:bold;letter-spacing:-0.2px">iContrainte</div>
<div class="a" style="left:300px;top:504.6px;font-size:10.9px;line-height:1;color:#565d6b;">Correspondance des formes</div>
<div class="a" style="left:302px;top:536.6px;font-size:11.6px;line-height:1;color:#e8e8e8;">OK</div>
<div class="a" style="left:384px;top:536.6px;font-size:11.6px;line-height:1;color:#e8e8e8;">Annuler</div>
<svg class="a" style="left:260px;top:153px" width="300" height="410" viewBox="260 153 300 410">
<path d="M323.5 162 l9 9 M332.5 162 l-9 9" stroke="#dedede" stroke-width="1.5"/>
<path d="M352 160.5 v11 M346.5 166 h11" stroke="#9a9ea6" stroke-width="1.8"/>
<path d="M538 160 h14 M538 165 h14 M538 170 h14" stroke="#e6e6e6" stroke-width="1.8"/>
<path d="M338 187 l4 4.5 l-4 4.5" stroke="#dcdcdc" stroke-width="1.3" fill="none"/>
<!-- orange cube & eye -->
<path d="M511 188 l4 -4 h9 v10 l-4 4 h-9z" fill="#f09a50"/><rect x="514" y="189" width="5" height="5" fill="#3b4252"/><path d="M520 188 l4 -4 v10 l-4 4z" fill="#d0782e"/>
<path d="M531 192 q7 -7 14 0 q-7 7 -14 0z" fill="#dcdcdc"/><circle cx="538" cy="192" r="2.2" fill="#3b4252"/>
<!-- triangles -->
<g fill="#b8bcc4"><path d="M276.5 218.5 h7 l-3.5 6z"/><path d="M277 299 h6 l-3 5z"/><path d="M277 380.5 h6 l-3 5z"/><path d="M277 437 h6 l-3 5z"/></g>
<!-- cursor + profile icons -->
<path d="M382.5 240 v11 l2.5 -2.5 l2 4 l1.5 -0.8 l-2 -4 l3.5 0z" fill="#e0e0e0"/>
<path d="M382.5 266 v11 l2.5 -2.5 l2 4 l1.5 -0.8 l-2 -4 l3.5 0z" fill="#e0e0e0"/>
<path d="M399 240 h4 q6 1 6.5 10 h-10.5z" fill="none" stroke="#d0d0d0" stroke-width="1.2"/><path d="M401 242 l6 7" stroke="#888" stroke-width=".8"/>
<path d="M400 266 h11 l-4 6 h-11z" fill="none" stroke="#d0d0d0" stroke-width="1.2"/>
<circle cx="534.2" cy="246.3" r="5" fill="#9aa0aa"/><path d="M531.7 243.8 l5 5 M536.7 243.8 l-5 5" stroke="#3b4252" stroke-width="1.3"/>
<path d="M528 265 h9 M528 278.5 h9" stroke="#f4a46a" stroke-width="1.5"/><path d="M532.5 266 v12" stroke="#e0e0e0" stroke-width="1.3"/><path d="M530 268 l2.5 -2.5 l2.5 2.5 M530 276 l2.5 2.5 l2.5 -2.5" stroke="#e0e0e0" stroke-width="1.2" fill="none"/>
<!-- direction icons -->
<g>
<path d="M384 321 l10 -2 v10 l-10 3z" fill="#f4b07a"/><path d="M380 334 l14 -14" stroke="#e0e0e0" stroke-width="1.6"/><path d="M380 334 l1 -4 l3 3z M394 320 l-1 4 l-3 -3z" fill="#e0e0e0"/>
<path d="M408 323 l10 -2 v10 l-10 3z" fill="#f4b07a"/><path d="M414 327 l10 -10" stroke="#e0e0e0" stroke-width="1.6"/><path d="M425 316 l-1 4 l-3 -3z" fill="#e0e0e0"/>
<path d="M440 323 l10 -2 v10 l-10 3z" fill="#f4b07a"/><path d="M436 334 l16 -16" stroke="#e0e0e0" stroke-width="1.6"/><path d="M436 334 l1 -4 l3 3z M452 318 l-1 4 l-3 -3z" fill="#e0e0e0"/>
<rect x="461.5" y="318" width="1" height="18" fill="#2f3540"/>
<path d="M472 325 l10 -2 v10 l-10 3z" fill="#f4b07a"/><path d="M471 335 l6 -6" stroke="#e0e0e0" stroke-width="1.6"/><path d="M478 328 l9 -9" stroke="#3aa8ee" stroke-width="1.6"/><path d="M488 318 l-1 4 l-3 -3z" fill="#3aa8ee"/>
<path d="M532 327 h7 l-3.5 4z" fill="#b8bcc4"/>
</g>
<!-- distance field extras -->
<rect x="491" y="345" width="1" height="18" fill="#454c5a"/><path d="M497 351 l4 3 l-4 3z" fill="#a0a4ac"/>
<path d="M509 347 v11 h5" stroke="#e0e0e0" stroke-width="1.4" fill="none"/><path d="M508 360 h8" stroke="#f4b07a" stroke-width="1.5"/>
<path d="M533 347 v7 M530 351 l3 3 l3 -3" stroke="#e0e0e0" stroke-width="1.5" fill="none"/><path d="M528 356 h10 v5 h-10z" fill="#c8c8c8"/>
<!-- boolean icons -->
<path d="M381 409 h5 v-7 h6 v7 h4 v7 h-15z" fill="#8fcdf5"/><rect x="384" y="403" width="8" height="7" fill="#b8e0fa"/>
<path d="M408 408 h3 v6 h10 v-6 h3 v9 h-16z" fill="#8fcdf5"/><rect x="412" y="401" width="8" height="12" fill="#c0545a"/>
<path d="M437 408 h15 v8 h-15z" fill="#6a6e78"/><rect x="441" y="402" width="7" height="5" fill="#6a6e78"/><rect x="441" y="408" width="7" height="5" fill="#8fcdf5"/>
<rect x="461.5" y="401" width="1" height="18" fill="#2f3540"/>
<rect x="471" y="404" width="12" height="9" fill="#8fcdf5"/><rect x="470" y="414" width="16" height="3" fill="#888c94"/><path d="M484 401 v7 M480.5 404.5 h7" stroke="#4ad06a" stroke-width="1.8"/>
<path d="M532 409 h7 l-3.5 4z" fill="#b8bcc4"/>
<!-- depouille extras -->
<path d="M508 461 l4 3 l-4 3z" fill="#a0a4ac"/>
<path d="M528 469 l11 -11 M528 469 l1 -4 l3 3z M539 458 l-1 4 l-3 -3z" stroke="#e0e0e0" stroke-width="1.4" fill="#e0e0e0"/>
<path d="M529 470 l4 -4" stroke="#3aa8ee" stroke-width="1.4"/>
<path d="M280 506 l4 4 l7 -8" stroke="#5f6570" stroke-width="2" fill="none"/>
<path d="M533.5 535 v13 M527 541.5 h13" stroke="#4ad06a" stroke-width="3.2"/>
</svg>

<svg class="a" style="left:0;top:0" width="1384" height="604" viewBox="0 0 1384 604">
<defs><g id="chk"><path d="M1 2 L11.5 10.7 L35.7 -11.9" stroke="#000" stroke-opacity=".35" stroke-width="7.5" fill="none"/><path d="M0 0 L10.5 8.7 L34.7 -13.9" stroke="#2bb68f" stroke-width="7.5" fill="none"/><path d="M-2.4 2.9 L10.5 13.3 L37.1 -11.2" stroke="#1f9a78" stroke-width="1.6" fill="none"/></g></defs>
<use href="#chk" x="123.5" y="321.7"/>
<use href="#chk" x="337.1" y="352.1"/>
<use href="#chk" x="411.9" y="428.6"/>
<use href="#chk" x="453.1" y="462"/>
<use href="#chk" x="707.9" y="340.6"/>
</svg>
</body></html>
